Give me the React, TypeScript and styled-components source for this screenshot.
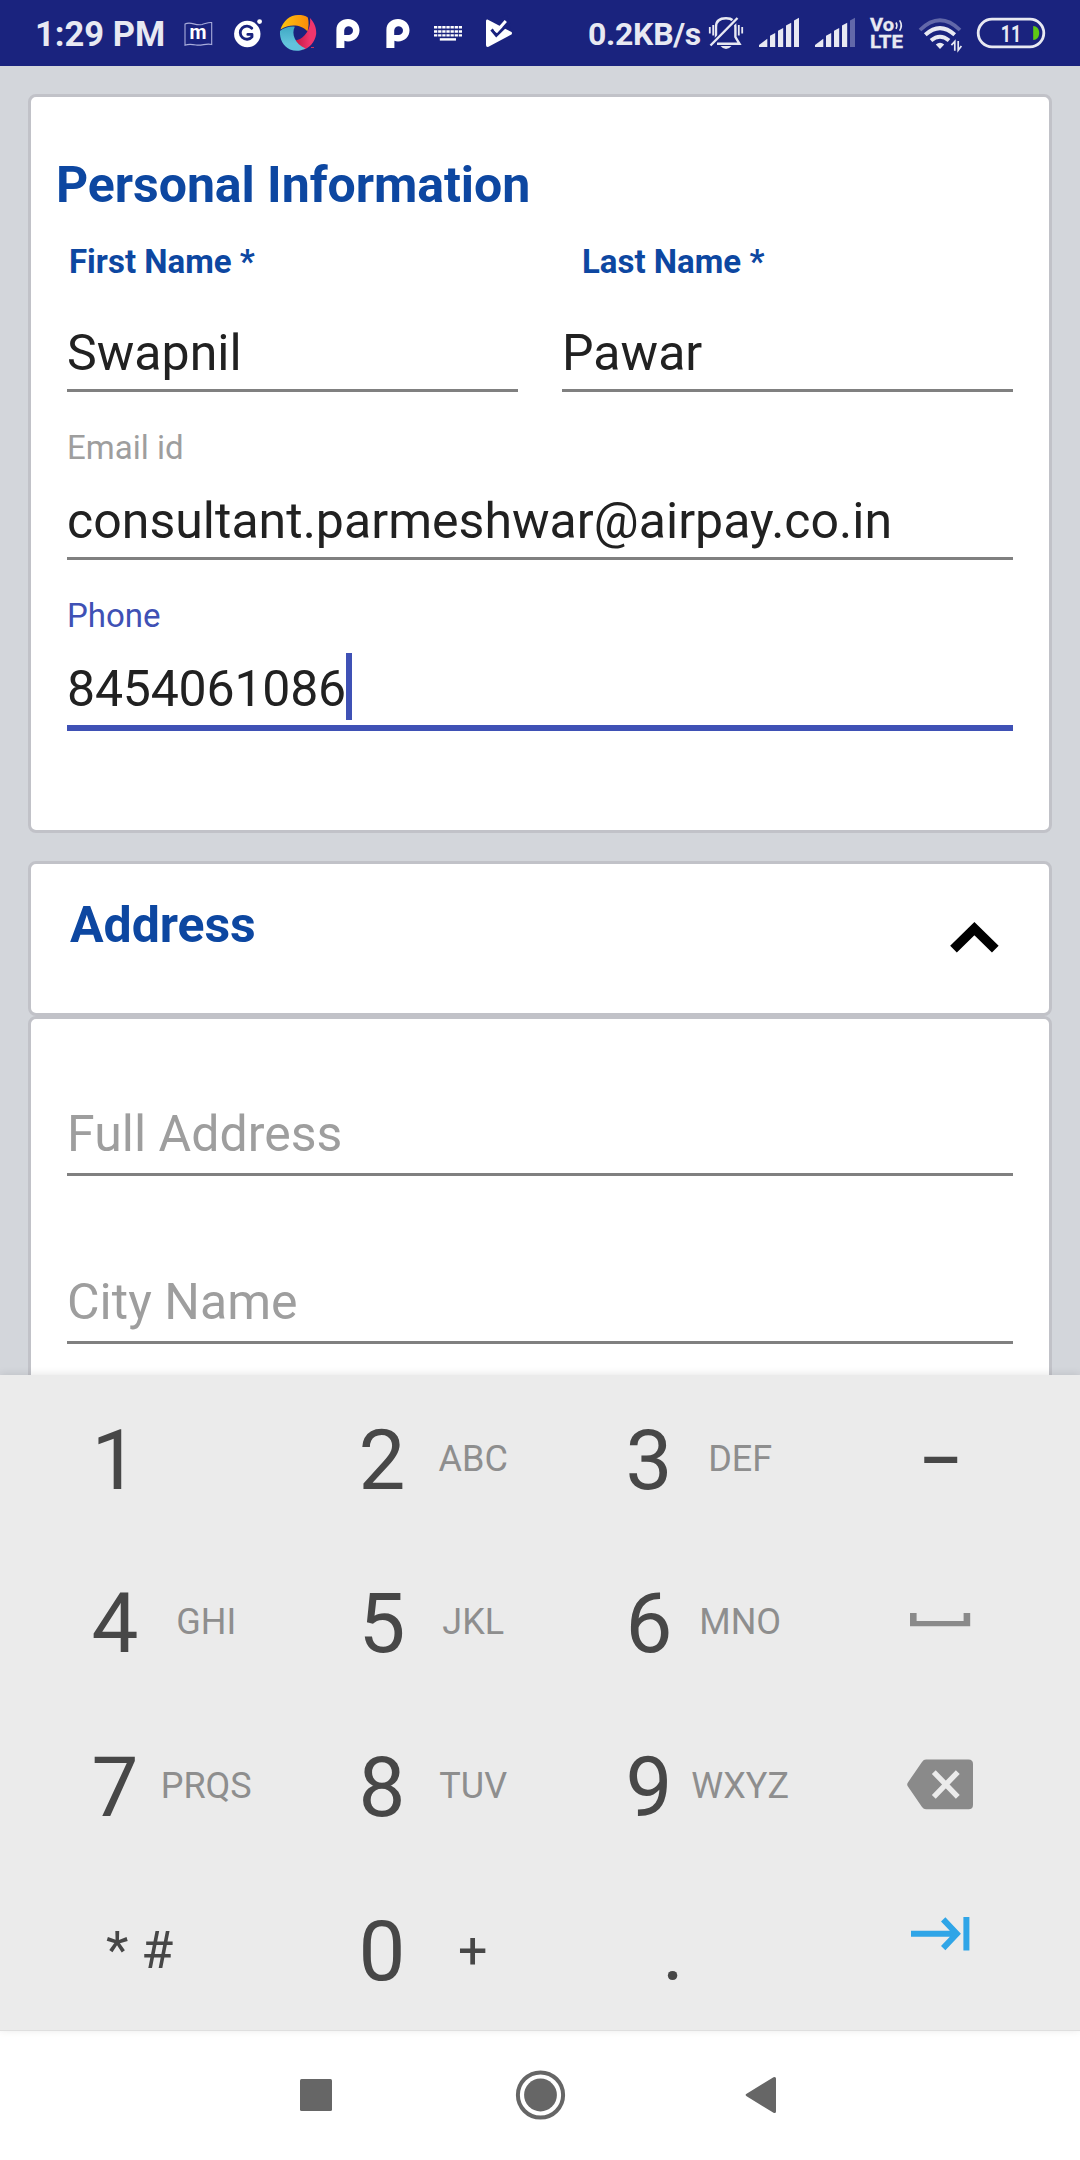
import React from "react";
import styled, { createGlobalStyle } from "styled-components";

const GlobalStyle = createGlobalStyle`
  * { box-sizing: border-box; }
  body {
    margin: 0;
    background: #ffffff;
    font-family: Roboto, "Noto Sans", sans-serif;
  }
`;

const Screen = styled.div`
  display: flex;
  flex-direction: column;
  width: 1080px;
  height: 2160px;
  overflow: hidden;
  background: #ffffff;
`;

/* ---------- status bar ---------- */

const StatusBar = styled.header`
  display: flex;
  flex: none;
  justify-content: space-between;
  height: 66px;
  padding: 0 34px 0 35px;
  background: #1a237e;
  color: #e8e9f2;
`;

const StatusGroup = styled.div`
  display: flex;
  align-items: center;
`;

const StatusText = styled.span<{ $width: number; $size: number; $tracking?: number }>`
  width: ${(p) => p.$width}px;
  padding-top: 2px;
  font-size: ${(p) => p.$size}px;
  font-weight: 700;
  letter-spacing: ${(p) => p.$tracking ?? 0}px;
  line-height: 68px;
  white-space: nowrap;
`;

const GlyphSvg = styled.svg<{ $gap: number }>`
  flex: none;
  display: block;
  height: 66px;
  margin-left: ${(p) => p.$gap}px;
`;

type GlyphProps = { x: number; w: number; gap?: number; children: React.ReactNode };

const Glyph = ({ x, w, gap = 0, children }: GlyphProps) => (
  <GlyphSvg $gap={gap} width={w} viewBox={`${x} 0 ${w} 66`} fill="none">
    {children}
  </GlyphSvg>
);

const INK = "#e8e9f2";
const BAR = "#1a237e";

const FlagIcon = () => (
  <Glyph x={182} w={32}>
    <path
      d="M185 24 C191 21 195 26 202 24.5 C206 23.5 209 22 211.7 22.6 V44.5 C206 43 202 46 196 45 C192 44.2 188 44 185 45.2 Z"
      stroke="#a9addb"
      strokeWidth="1.1"
    />
    <text x="198" y="38.6" fill="#fff" fontSize="21" fontWeight="700" textAnchor="middle" textLength="17" lengthAdjust="spacingAndGlyphs">
      m
    </text>
  </Glyph>
);

const GIcon = () => (
  <Glyph x={232} w={32} gap={18}>
    <circle cx="247.3" cy="34" r="13.2" fill="#fff" />
    <circle cx="259.6" cy="21.6" r="2.4" fill="#fff" />
    <path
      d="M251.8 28.3 A6.6 6.6 0 1 0 252 36.8 V34.4 H247.8"
      stroke={BAR}
      strokeWidth="2.8"
      strokeLinecap="round"
      strokeLinejoin="round"
    />
  </Glyph>
);

const SwirlIcon = () => (
  <Glyph x={279} w={38} gap={15}>
    <defs>
      <linearGradient id="sun" x1="0" x2="1">
        <stop offset="0" stopColor="#fdc50f" />
        <stop offset="1" stopColor="#fb8c0a" />
      </linearGradient>
      <linearGradient id="rose" x1="0" x2="1">
        <stop offset="0" stopColor="#c01841" />
        <stop offset="0.7" stopColor="#f0356c" />
      </linearGradient>
      <linearGradient id="sea" x1="0" x2="0" y1="0" y2="1">
        <stop offset="0" stopColor="#3fa9c4" />
        <stop offset="0.7" stopColor="#62c3dc" />
      </linearGradient>
    </defs>
    <path d="M280.5 29.5 C283 21 290 15 298 15 C302 15 305.5 15.5 307.8 17.5 C309 22 308.8 27 307.5 31.5 C301 24 289 24 280.5 29.5Z" fill="url(#sun)" />
    <path d="M310 18 C315 23 316.5 29 316.2 34 C315 42 309 48.5 303.5 49.5 C299 47 296.5 43.5 295 40.4 C303 40 311.5 30 310 18Z" fill="url(#rose)" />
    <path d="M280 31 C284 28 290 26 294.8 26.8 C291 34 295 44 305.5 48.5 C300 51.5 295 51.4 290 49.5 C283 46 279.5 39 280 31Z" fill="url(#sea)" />
    <path d="M311 47.5 h3" stroke="#c5325f" strokeWidth="1" />
  </Glyph>
);

const PayIcon = ({ x, gap }: { x: number; gap: number }) => (
  <Glyph x={x} w={26} gap={gap}>
    <path
      transform={`translate(${x} 0)`}
      fill="#fff"
      fillRule="evenodd"
      d="M1.4 48 V30 C1.4 23 6.5 19 13 19 C19.8 19 24.5 24 24.5 30.2 C24.5 36.6 19.8 41.4 13 41.4 C11.5 41.4 10.4 41.2 9.4 40.8 V48 Z M9.2 35 H13 A4.4 4.4 0 1 0 9.2 30.4 Z"
    />
  </Glyph>
);

const KeyboardIcon = () => (
  <Glyph x={433} w={30} gap={22}>
    <path d="M434 27.3H462M434 31.5H462M434 35.4H462" stroke="#fff" strokeWidth="2.4" strokeDasharray="3.3 0.83" />
    <path d="M439.8 39.4H456" stroke="#fff" strokeWidth="2.4" />
  </Glyph>
);

const PlayCheckIcon = () => (
  <Glyph x={485} w={28} gap={22}>
    <path d="M487.5 19.5 L511.5 32 Q512.5 33.2 511.5 34.4 L488.5 46.8 Q486 47.5 486 45 V21 Q486 19 487.5 19.5Z" fill="#fff" />
    <path d="M500 18 L507 15 L511 29.5 L500 23 Z" fill={BAR} />
    <path d="M491.5 29.5 L496.3 35.2 L510 22" stroke={BAR} strokeWidth="3" />
    <path d="M495 29.4 L497 31 L505.8 21" stroke="#fff" strokeWidth="3" />
  </Glyph>
);

const MutedBellIcon = () => (
  <Glyph x={707} w={38}>
    <path d="M716 38 V27 C716 21 720 18.3 726 18.3 C732 18.3 735.4 21.5 735.4 27 V37 L739.5 43.8 H717" stroke={INK} strokeWidth="2.4" />
    <path d="M711 45 L738 18" stroke={BAR} strokeWidth="5" />
    <path d="M710.5 45.5 L737.5 18" stroke={INK} strokeWidth="2.4" />
    <path d="M720.5 46 H731.5 Q729 49 726 49 Q723 49 720.5 46Z" fill={INK} />
    <path d="M709.8 27V33.5M713.2 25V35.5M738.8 25V35.5M742.2 27V33.5" stroke={INK} strokeWidth="1.8" />
  </Glyph>
);

const SignalIcon = ({ x, gap, weak }: { x: number; gap: number; weak?: boolean }) => (
  <Glyph x={x} w={42} gap={gap}>
    <g transform={`translate(${x} 0)`} fill={INK}>
      <path d="M1 47V45L9.3 38.7V47Z" />
      <path d="M12 47V35.8L17.2 33V47Z" />
      <path d="M20 47V30.8L25.2 28V47Z" />
      <path d="M28 47V25.6L33.2 22.8V47Z" />
      <path d="M36 47V20.6L41 17.8V47Z" fill={weak ? "#6268a9" : INK} />
    </g>
  </Glyph>
);

const VolteIcon = () => (
  <Glyph x={869} w={35} gap={13}>
    <g fill={INK} stroke={INK} strokeWidth="0.3" fontSize="18" fontWeight="700">
      <text x="870" y="31" textLength="24" lengthAdjust="spacingAndGlyphs">Vo</text>
      <text x="870" y="48" textLength="33" lengthAdjust="spacingAndGlyphs">LTE</text>
    </g>
    <path d="M896 22.5 Q897.8 25.5 896 28.8 M899.6 20.4 Q903 25.5 899.6 30.8" stroke={INK} strokeWidth="1.6" />
  </Glyph>
);

const WifiIcon = () => (
  <Glyph x={918} w={45} gap={14}>
    <path d="M920 30 Q940 10.5 960 30" stroke="#6268a9" strokeWidth="3.8" />
    <path d="M925.3 34.8 Q940 21.5 954.7 34.8" stroke={INK} strokeWidth="4" />
    <path d="M931 40.5 Q940 33 949 40.5" stroke={INK} strokeWidth="4" />
    <path d="M935.8 44.5 Q940 40.8 944.2 44.5 L940 49 Z" fill={INK} />
    <path d="M954.8 50.8V41.5L951.4 45.2M958.2 41V50.2L961.4 46" stroke={INK} strokeWidth="1.7" />
  </Glyph>
);

const BatteryIcon = () => (
  <Glyph x={976} w={70} gap={13}>
    <rect x="978.2" y="19.2" width="65.6" height="27.6" rx="13.8" stroke={INK} strokeWidth="2.8" />
    <path d="M1033.2 26 C1036.8 26 1039.2 29 1039.2 33 C1039.2 37 1036.8 40 1033.2 40Z" fill="#5fc914" />
    <text x="1011" y="42" fill={INK} fontSize="24" fontWeight="700" textAnchor="middle" textLength="20.5" lengthAdjust="spacingAndGlyphs">
      11
    </text>
  </Glyph>
);

/* ---------- form ---------- */

const Page = styled.main`
  display: flex;
  flex-direction: column;
  flex: none;
  height: 1309px;
  padding: 28px 28px 0;
  overflow: hidden;
  background: #d3d6db;
`;

const Card = styled.section<{ $height: number; $top?: number; $gap?: number }>`
  display: flex;
  flex-direction: column;
  flex: none;
  height: ${(p) => p.$height}px;
  margin-bottom: ${(p) => p.$gap ?? 0}px;
  padding: ${(p) => p.$top ?? 0}px 36px 0;
  border: 3px solid #c1c2c8;
  border-radius: 8px;
  background: #ffffff;
`;

const HeaderCard = styled(Card)`
  flex-direction: row;
  justify-content: space-between;
  padding-left: 39px;
`;

const Heading = styled.h2<{ $outdent?: number }>`
  margin: 0 0 0 -${(p) => p.$outdent ?? 0}px;
  color: #0d47a1;
  font-size: 50px;
  font-weight: 700;
  letter-spacing: -0.05px;
  line-height: 58px;
  white-space: nowrap;
`;

const NameLabels = styled.div`
  display: grid;
  grid-template-columns: 513px 1fr;
  margin: 28px 0 42px;
  padding-left: 2px;
`;

const NameLabel = styled.label`
  color: #0d47a1;
  font-size: 33px;
  font-weight: 700;
  line-height: 40px;
`;

const NameRow = styled.div`
  display: grid;
  grid-template-columns: 1fr 1fr;
  column-gap: 44px;
`;

const Field = styled.div<{ $top?: number }>`
  display: flex;
  flex-direction: column;
  margin-top: ${(p) => p.$top ?? 0}px;
`;

const FloatingLabel = styled.label<{ $active?: boolean }>`
  margin-bottom: 24px;
  color: ${(p) => (p.$active ? "#3f51b5" : "#9e9e9e")};
  font-size: 33px;
  line-height: 40px;
`;

const Line = styled.div<{ $active?: boolean; $empty?: boolean }>`
  display: flex;
  align-items: flex-end;
  padding-bottom: ${(p) => (p.$empty ? 10 : 7)}px;
  border-bottom: ${(p) => (p.$active ? "6px solid #3f51b5" : "3px solid #808080")};
  color: ${(p) => (p.$empty ? "#9e9e9e" : "#212121")};
  font-size: 50px;
  letter-spacing: ${(p) => (p.$active ? "-0.2px" : "0.03px")};
  line-height: 58px;
  white-space: nowrap;
`;

const Caret = styled.span`
  width: 6px;
  height: 67px;
  margin: -9px 0 -2px 0;
  background: #3f51b5;
`;

const ChevronSvg = styled.svg`
  margin: 19px -2px 0 0;
`;

/* ---------- keypad ---------- */

const Keypad = styled.section`
  position: relative;
  z-index: 1;
  display: grid;
  flex: none;
  grid-template-columns: 267px 267px 267px 1fr;
  grid-template-rows: repeat(4, 163.75px);
  height: 656px;
  padding-left: 6px;
  border-bottom: 1px solid #dfdfdf;
  background: #ebebeb;
  box-shadow: 0 -1px 8px rgba(0, 0, 0, 0.1);
`;

const Key = styled.div`
  display: flex;
  align-items: baseline;
  padding: 21.5px 0 0 79px;
  white-space: nowrap;
`;

const Digit = styled.span`
  width: 60px;
  color: #474747;
  font-size: 83.5px;
  line-height: 128px;
  text-align: center;
`;

const Letters = styled.span`
  position: relative;
  top: -18px;
  width: 122.4px;
  color: #8e8e8e;
  font-size: 36px;
  text-align: center;
`;

const Plus = styled(Letters)`
  top: -12px;
  width: 121.4px;
  color: #474747;
  font-size: 52px;
`;

const SymbolKey = styled.div<{ $left: number; $top: number }>`
  padding: ${(p) => p.$top}px 0 0 ${(p) => p.$left}px;
  color: #474747;
  font-size: 52px;
  line-height: 60px;
  white-space: pre;
`;

const DotKey = styled(Digit)`
  width: auto;
  padding-left: 43px;
`;

const DashKey = styled.div`
  padding-top: 22px;
  width: 267px;
  color: #474747;
  font-size: 66px;
  font-weight: 500;
  line-height: 128px;
  text-align: center;
`;

const IconKey = styled.div`
  display: block;

  svg {
    display: block;
  }
`;

/* ---------- navigation ---------- */

const NavBar = styled.nav`
  display: flex;
  flex: 1;
  align-items: center;
  gap: 179px;
  padding: 0 0 2px 300px;
  background: #ffffff;

  svg {
    flex: none;
  }
`;

const BackSvg = styled.svg`
  margin-left: -4px;
`;

const keyRows = [
  [["1", ""], ["2", "ABC"], ["3", "DEF"]],
  [["4", "GHI"], ["5", "JKL"], ["6", "MNO"]],
  [["7", "PRQS"], ["8", "TUV"], ["9", "WXYZ"]],
];

const sideKeys = [
  <DashKey key="dash">–</DashKey>,
  <IconKey key="space">
    <svg width="273" height="163" viewBox="807 1539 273 163">
      <path d="M910 1613H916.6V1621H963.6V1613H970.2V1626.2H910Z" fill="#8a8a8a" />
    </svg>
  </IconKey>,
  <IconKey key="erase">
    <svg width="273" height="163" viewBox="807 1702.5 273 163">
      <path
        d="M926 1759H968.5Q973 1759 973 1763.5V1804.2Q973 1808.8 968.5 1808.8H926Q923.6 1808.8 922 1806.4L907.6 1785.4Q906.8 1784 907.6 1782.4L922 1761.4Q923.6 1759 926 1759Z"
        fill="#8a8a8a"
      />
      <path d="M933.8 1771.6L957.8 1796.4M957.8 1771.6L933.8 1796.4" stroke="#ebebeb" strokeWidth="5.4" />
    </svg>
  </IconKey>,
];

const App = () => (
  <>
    <GlobalStyle />
    <Screen>
      <StatusBar>
        <StatusGroup>
          <StatusText $width={147} $size={34.5}>1:29 PM</StatusText>
          <FlagIcon />
          <GIcon />
          <SwirlIcon />
          <PayIcon x={335} gap={18} />
          <PayIcon x={385} gap={24} />
          <KeyboardIcon />
          <PlayCheckIcon />
        </StatusGroup>
        <StatusGroup>
          <StatusText $width={119} $size={32} $tracking={-0.3}>0.2KB/s</StatusText>
          <MutedBellIcon />
          <SignalIcon x={758} gap={13} />
          <SignalIcon x={814} gap={14} weak />
          <VolteIcon />
          <WifiIcon />
          <BatteryIcon />
        </StatusGroup>
      </StatusBar>

      <Page>
        <Card $height={739} $top={59} $gap={28}>
          <Heading $outdent={11}>Personal Information</Heading>
          <NameLabels>
            <NameLabel>First Name *</NameLabel>
            <NameLabel>Last Name *</NameLabel>
          </NameLabels>
          <NameRow>
            <Line>Swapnil</Line>
            <Line>Pawar</Line>
          </NameRow>
          <Field $top={36}>
            <FloatingLabel>Email id</FloatingLabel>
            <Line>consultant.parmeshwar@airpay.co.in</Line>
          </Field>
          <Field $top={36}>
            <FloatingLabel $active>Phone</FloatingLabel>
            <Line $active>
              8454061086
              <Caret />
            </Line>
          </Field>
        </Card>

        <HeaderCard $height={155} $top={32}>
          <Heading>Address</Heading>
          <ChevronSvg width="80" height="60" viewBox="935 915 80 60">
            <path d="M953.5 949.2L974.4 928.6L995.3 949.2" stroke="#000" strokeWidth="9.5" fill="none" />
          </ChevronSvg>
        </HeaderCard>

        <Card $height={500} $top={86}>
          <Line $empty>Full Address</Line>
          <Field $top={97}>
            <Line $empty>City Name</Line>
          </Field>
        </Card>
      </Page>

      <Keypad>
        {keyRows.map((row, i) => (
          <React.Fragment key={i}>
            {row.map(([digit, letters]) => (
              <Key key={digit}>
                <Digit>{digit}</Digit>
                <Letters>{letters}</Letters>
              </Key>
            ))}
            {sideKeys[i]}
          </React.Fragment>
        ))}
        <SymbolKey $left={100} $top={55}>* #</SymbolKey>
        <Key>
          <Digit>0</Digit>
          <Plus>+</Plus>
        </Key>
        <Key>
          <DotKey>.</DotKey>
        </Key>
        <IconKey>
          <svg width="273" height="163" viewBox="807 1866.25 273 163" fill="none" stroke="#2fa5e7" strokeWidth="6">
            <path d="M911 1934H957M943.2 1919.6L956.8 1934L943.2 1948.4M966.4 1917.2V1950.8" />
          </svg>
        </IconKey>
      </Keypad>

      <NavBar>
        <svg width="32" height="32" viewBox="0 0 32 32">
          <rect width="32" height="32" rx="1.5" fill="#666666" />
        </svg>
        <svg width="59" height="50" viewBox="0 0 59 50">
          <circle cx="29.5" cy="25" r="22.6" fill="none" stroke="#666666" strokeWidth="4" />
          <circle cx="29.5" cy="25" r="16.4" fill="#666666" />
        </svg>
        <BackSvg width="32" height="38" viewBox="0 0 32 38">
          <path d="M1.6 17.8L28.5 1.2Q31 0.4 31 2.6V35.4Q31 37.6 28.5 36.8L1.6 20.2Q-0.4 19 1.6 17.8Z" fill="#666666" />
        </BackSvg>
      </NavBar>
    </Screen>
  </>
);

export default App;
